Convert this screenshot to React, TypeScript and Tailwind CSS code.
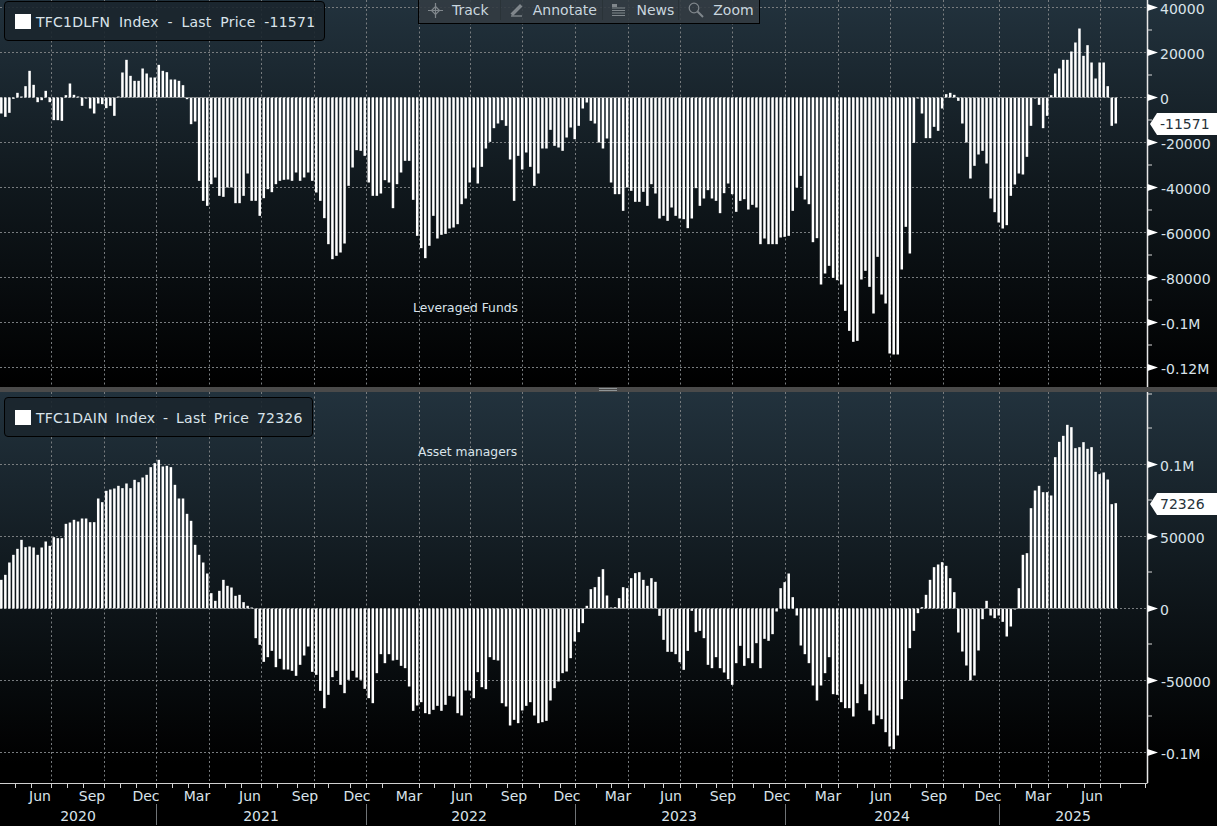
import React from 'react';

// bar heights read off the chart, in thirds of a pixel from the zero line
const leveragedFunds = [
  -48, -58, -46, -4, 14, 2, 34, 80, 38, -14,
  -8, 20, -14, -68, -68, -70, 7, 42, 8, 2,
  -25, -2, -33, -48, -18, -20, -32, -25, -55, 1,
  75, 113, 65, 50, 50, 87, 72, 60, 60, 98,
  80, 76, 54, 54, 50, 37, -5, -80, -72, -250,
  -310, -325, -260, -240, -295, -298, -270, -270, -317, -317,
  -295, -228, -310, -310, -355, -302, -275, -284, -260, -250,
  -247, -246, -250, -225, -250, -240, -225, -250, -285,
  -310, -362, -440, -485, -475, -465, -438, -265, -210, -158,
  -160, -175, -255, -295, -295, -288, -248, -255, -332, -260,
  -225, -190, -190, -307, -415, -452, -482, -445, -355, -423,
  -412, -409, -393, -390, -380, -320, -303, -255, -210, -258,
  -208, -153, -133, -92, -78, -68, -85, -186, -310, -175,
  -216, -165, -208, -265, -228, -153, -153, -97, -145, -150,
  -160, -120, -90, -125, -85, -33, -15, -70, -78, -135,
  -153, -123, -255, -290, -290, -340, -270, -280, -313, -313,
  -283, -325, -260, -288, -363, -355, -370, -330, -355, -363,
  -365, -392, -363, -272, -325, -303, -278, -303, -310, -347,
  -287, -258, -290, -343, -310, -305, -336, -322, -330, -440,
  -423, -440, -440, -440, -420, -418, -415, -340, -270,
  -235, -306, -320, -434, -422, -561, -528, -505, -541, -548,
  -561, -640, -700, -733, -730, -546, -520, -568, -648, -478,
  -591, -618, -768, -771, -771, -516, -388, -468, -136, -1,
  -48, -122, -122, -88, -100, -33, 10, 14, 8, -10,
  -78, -135, -243, -205, -171, -160, -198, -303, -344, -375,
  -393, -383, -295, -261, -228, -231, -178, -85, -1, -22,
  -92, -55, 7, 72, 87, 113, 113, 138, 165, 207,
  125, 157, 105, 57, 105, 105, 34, -85, -78,
];

const assetManagers = [
  86, 101, 138, 161, 179, 206, 184, 186, 183, 161,
  183, 201, 188, 214, 211, 211, 254, 258, 266, 261,
  270, 270, 259, 259, 330, 319, 353, 357, 360, 368,
  361, 375, 361, 386, 379, 393, 401, 424, 436, 446,
  426, 428, 424, 371, 330, 330, 284, 263, 191, 161,
  138, 105, 46, 23, 53, 86, 68, 63, 38, 41,
  19, 8, 2, -89, -109, -160, -146, -127, -176, -151,
  -183, -183, -187, -202, -169, -141, -114, -190, -199, -247,
  -299, -259, -206, -187, -229, -254, -214, -187, -207, -214,
  -241, -269, -284, -194, -137, -164, -137, -156, -154,
  -172, -179, -234, -307, -291, -281, -314, -317, -304, -292,
  -307, -289, -262, -264, -314, -321, -246, -246, -269, -191,
  -236, -242, -146, -154, -156, -284, -294, -351, -334, -344,
  -306, -292, -281, -321, -344, -341, -337, -276, -239, -219,
  -194, -189, -149, -99, -71, -44, 8, 58, 64, 95,
  118, 39, 1, 4, 31, 64, 61, 91, 106, 109,
  86, 68, 91, 80, -22, -94, -130, -130, -137, -161,
  -184, -127, -7, -71, -67, -89, -169, -179, -146, -179,
  -192, -212, -229, -164, -112, -172, -149, -164, -104, -179,
  -91, -97, -77, -9, 61, 79, 105, 34, -21,
  -111, -137, -164, -231, -276, -231, -194, -146, -257, -259,
  -281, -299, -299, -324, -284, -227, -257, -306, -347, -321,
  -332, -371, -414, -422, -381, -272, -216, -119, -67, -14,
  4, 41, 86, 124, 132, 139, 128, 91, 49, -72,
  -129, -171, -216, -201, -126, -32, 23, -21, -29, -21,
  -40, -84, -54, -1, 61, 161, 166, 301, 354, 368,
  349, 349, 339, 454, 500, 518, 551, 544, 481, 484,
  499, 479, 484, 410, 403, 408, 387, 313, 316,
];

const gridX = [51, 104, 156, 209, 261, 314, 366, 419, 470, 522, 575, 628, 680, 732, 785, 838, 890, 943, 999, 1048, 1100];
const monthTicks = [
  15, 31, 51, 67, 83, 104, 120, 136, 156, 172, 188, 209, 225, 241, 261, 277, 297, 314, 328, 350, 366, 382,
  419, 434, 454, 470, 486, 507, 522, 539, 560, 575, 596, 611, 628, 644, 663, 680, 696, 716, 732, 753, 769, 785,
  805, 821, 838, 857, 874, 890, 910, 926, 943, 963, 979, 999, 1015, 1031, 1048, 1067, 1084, 1100, 1120, 1145,
];
const monthLabels = [
  ['Jun', 40], ['Sep', 92], ['Dec', 146], ['Mar', 197], ['Jun', 250], ['Sep', 305], ['Dec', 357],
  ['Mar', 409], ['Jun', 462], ['Sep', 514], ['Dec', 567], ['Mar', 618], ['Jun', 671], ['Sep', 723], ['Dec', 777],
  ['Mar', 828], ['Jun', 881], ['Sep', 934], ['Dec', 988], ['Mar', 1038], ['Jun', 1092],
] as const;
const yearLabels = [['2020', 78], ['2021', 261], ['2022', 469], ['2023', 679], ['2024', 892], ['2025', 1073]] as const;
const yearDividers = [156, 366, 575, 785, 999];

const AXIS_X = 1147.5;
const WIDTH = 1217;

interface ChartProps {
  height: number;
  gridBottom: number;
  zero: number;
  bars: number[];
  labels: { y: number; text: string }[];
  minor: number[];
}

const Chart: React.FC<ChartProps> = ({ height, gridBottom, zero, bars, labels, minor }) => (
  <svg width={WIDTH} height={height} className="block">
    {labels.map((l) => (
      <line key={l.text} x1={0} x2={AXIS_X} y1={l.y} y2={l.y} stroke="#787c7f" strokeDasharray="2 2" />
    ))}
    {gridX.map((x) => (
      <line key={x} x1={x + 0.5} x2={x + 0.5} y1={0} y2={gridBottom} stroke="#787c7f" strokeDasharray="2 2.5" />
    ))}
    {bars.map((h, i) => {
      const size = Math.max(Math.abs(h) / 3, 1);
      return (
        <rect
          key={i}
          x={4.038 * i + 0.05}
          width={2.5}
          y={h > 0 ? zero - size : zero}
          height={size}
          fill="#fff"
        />
      );
    })}
    <line x1={AXIS_X} x2={AXIS_X} y1={0} y2={height} stroke="#e8e8e8" strokeWidth={1.5} />
    {minor.map((y) => (
      <line key={y} x1={AXIS_X} x2={1152} y1={y} y2={y} stroke="#d8d8d8" />
    ))}
    {labels.map((l) => (
      <g key={l.text}>
        <polygon points={`${AXIS_X},${l.y - 3.5} 1158,${l.y} ${AXIS_X},${l.y + 3.5}`} fill="#fff" />
        <text x={l.text.startsWith('-') ? 1161 : 1160} y={l.y + 1} dominantBaseline="central" className="fill-[#d9e3ea] text-[14px]">
          {l.text}
        </text>
      </g>
    ))}
  </svg>
);

const Legend: React.FC<{ text: string; className: string }> = ({ text, className }) => (
  <div className={`absolute left-[4px] flex h-[40px] items-center gap-[5px] rounded-[4px] border border-black bg-[#1b262d]/90 pl-[10px] pr-[9px] text-[14px] text-[#d9e3ea] ${className}`}>
    <span className="h-[15px] w-[16px] bg-white" />
    <span className="pt-[2px]">{text}</span>
  </div>
);

const Flag: React.FC<{ text: string; className: string }> = ({ text, className }) => (
  <div className={`absolute left-[1150px] flex h-[22px] w-[67px] items-center bg-white pl-[10px] text-[14px] text-[#26323a] [clip-path:polygon(0_50%,7px_0,100%_0,100%_100%,7px_100%)] ${className}`}>
    {text}
  </div>
);

const ToolButton: React.FC<{ icon: React.ReactNode; label: string; className: string }> = ({ icon, label, className }) => (
  <div className={`flex h-full items-center border-r border-[#2a3338] last:border-r-0 ${className}`}>
    {icon}
    <span>{label}</span>
  </div>
);

const Toolbar = () => (
  <div className="absolute left-[418px] top-0 flex h-[24px] w-[342px] border border-t-0 border-black bg-[#333c42]/90 pb-[3px] text-[14px] text-[#c9d6df]">
    <ToolButton
      className="w-[82px] gap-[8px] pl-[8px]"
      label="Track"
      icon={
        <svg width="17" height="17" viewBox="0 0 17 17" fill="none" stroke="#80878c" strokeWidth="1.2">
          <path d="M8.5 1v15M1 8.5h15" />
          <path d="M8.5 4.5l4 4-4 4-4-4z" />
        </svg>
      }
    />
    <ToolButton
      className="w-[103px] gap-[10px] pl-[9px]"
      label="Annotate"
      icon={
        <svg width="13" height="14" viewBox="0 0 13 14" fill="none" stroke="#80878c" strokeWidth="1.4">
          <path d="M1.5 10.5L10 2l1.5 1.5L3 12z" fill="#80878c" />
          <path d="M1 13h11" />
        </svg>
      }
    />
    <ToolButton
      className="w-[76px] gap-[11px] pl-[9px]"
      label="News"
      icon={
        <svg width="13" height="13" viewBox="0 0 13 13" fill="none" stroke="#80878c" strokeWidth="1.1">
          <path d="M0 1.5h5M0 4h13M0 6.5h13M0 9h13M0 11.5h13" />
          <rect x="0" y="0" width="5" height="3" fill="#80878c" stroke="none" />
        </svg>
      }
    />
    <ToolButton
      className="w-[80px] gap-[9px] pl-[9px]"
      label="Zoom"
      icon={
        <svg width="16" height="16" viewBox="0 0 16 16" fill="none" stroke="#80878c" strokeWidth="1.2">
          <circle cx="6" cy="6" r="4.8" />
          <path d="M9.5 9.5L15 15" strokeWidth="2" />
        </svg>
      }
    />
  </div>
);

const TimeAxis = () => (
  <svg width={WIDTH} height={43} className="block">
    <line x1={0} x2={AXIS_X} y1={0} y2={0} stroke="#d0d0d0" strokeWidth={2} />
    {monthTicks.map((x) => (
      <line key={x} x1={x + 0.5} x2={x + 0.5} y1={0} y2={5} stroke="#d0d0d0" />
    ))}
    {monthLabels.map(([m, x]) => (
      <text key={x} x={x} y={13} textAnchor="middle" dominantBaseline="central" className="fill-[#d9e3ea] text-[14px]">
        {m}
      </text>
    ))}
    {yearDividers.map((x) => (
      <line key={x} x1={x + 0.5} x2={x + 0.5} y1={21} y2={42} stroke="#6f7376" />
    ))}
    {yearLabels.map(([y, x]) => (
      <text key={y} x={x} y={33} textAnchor="middle" dominantBaseline="central" className="fill-[#d9e3ea] text-[14px]">
        {y}
      </text>
    ))}
  </svg>
);

const topLabels = ['40000', '20000', '0', '-20000', '-40000', '-60000', '-80000', '-0.1M', '-0.12M'].map((text, i) => ({
  text,
  y: 7.5 + i * 45,
}));
const topMinor = [30, 75, 120, 165, 210, 255, 300, 345];

const bottomLabels = ['0.1M', '50000', '0', '-50000', '-0.1M'].map((text, i) => ({
  text,
  y: 72.5 + i * 72,
}));
const bottomMinor = [2, 36, 108, 180, 252, 324];

export default function App() {
  return (
    <div className="flex h-[826px] w-[1217px] flex-col overflow-hidden bg-black font-['DejaVu_Sans',sans-serif]">
      <div className="relative h-[387px] bg-[linear-gradient(180deg,#22323d_0%,#10181d_48%,#000_100%)]">
        <Chart height={387} gridBottom={385} zero={97.5} bars={leveragedFunds} labels={topLabels} minor={topMinor} />
        <Legend text="TFC1DLFN Index - Last Price -11571" className="top-[1px] [word-spacing:4px] tracking-[0.24px]" />
        <Toolbar />
        <Flag text="-11571" className="top-[113px]" />
        <div className="absolute left-[413px] top-[299px] text-[12.3px] text-[#d9e3ea]">Leveraged Funds</div>
      </div>
      <div className="flex h-[5px] justify-center bg-[#4a4a4a]">
        <div className="ml-[-1px] mt-[1px] h-[3px] w-[18px] border-y border-[#8f9496]" />
      </div>
      <div className="relative h-[391px] bg-[linear-gradient(180deg,#22323d_0%,#10181d_48%,#000_95%)]">
        <Chart height={391} gridBottom={391} zero={216.5} bars={assetManagers} labels={bottomLabels} minor={bottomMinor} />
        <Legend text="TFC1DAIN Index - Last Price 72326" className="top-[5px] [word-spacing:3px] tracking-[0.24px]" />
        <Flag text="72326" className="top-[101px]" />
        <div className="absolute left-[418px] top-[51px] text-[12.3px] text-[#d9e3ea]">Asset managers</div>
      </div>
      <TimeAxis />
    </div>
  );
}
